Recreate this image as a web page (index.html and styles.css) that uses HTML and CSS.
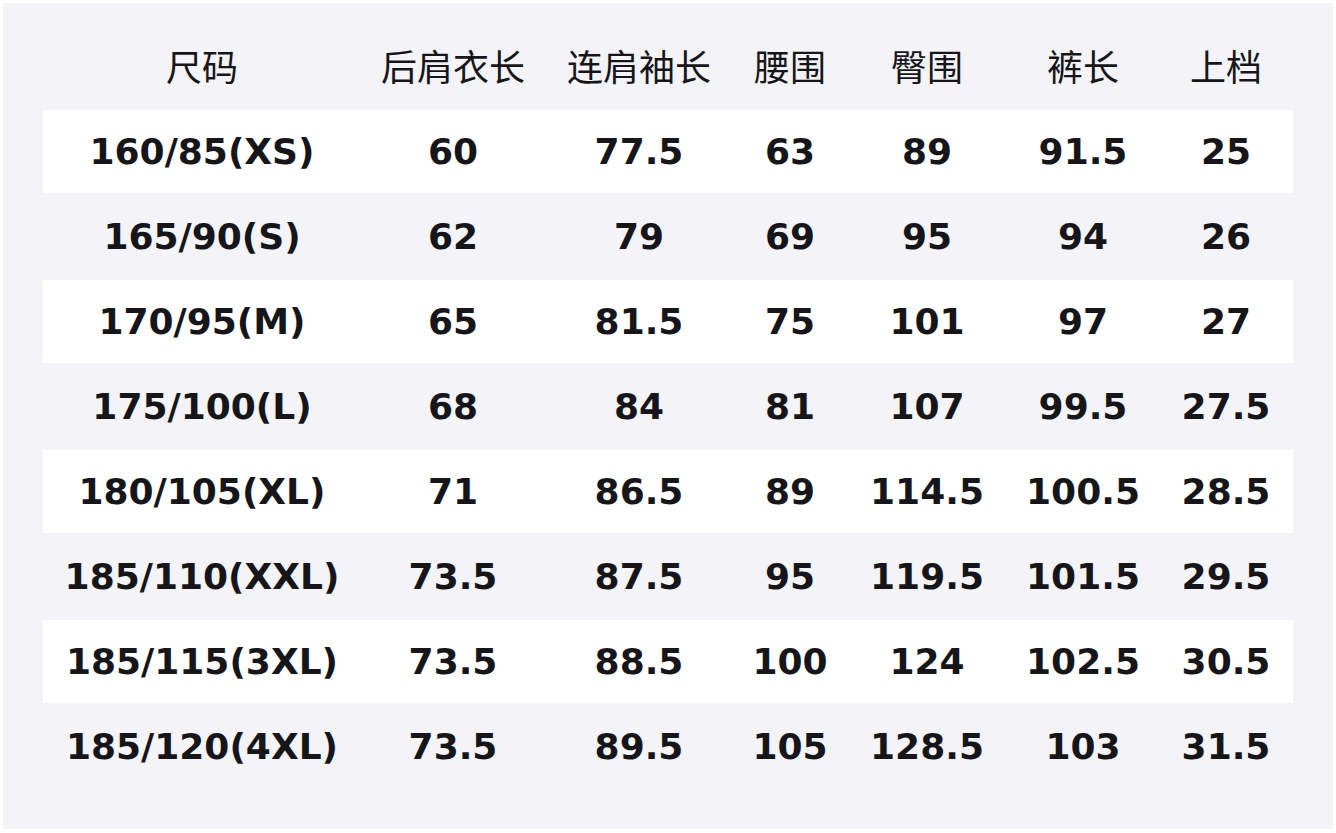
FILE: index.html
```html
<!DOCTYPE html>
<html lang="zh-CN">
<head>
<meta charset="utf-8">
<title>尺码表</title>
<link rel="stylesheet" href="styles.css">
</head>
<body>
<div class="panel">
  <div class="row head">
    <div>尺码</div><div>后肩衣长</div><div>连肩袖长</div><div>腰围</div><div>臀围</div><div>裤长</div><div>上档</div>
  </div>
  <div class="row light">
    <div>160/85(XS)</div><div>60</div><div>77.5</div><div>63</div><div>89</div><div>91.5</div><div>25</div>
  </div>
  <div class="row dark">
    <div>165/90(S)</div><div>62</div><div>79</div><div>69</div><div>95</div><div>94</div><div>26</div>
  </div>
  <div class="row light">
    <div>170/95(M)</div><div>65</div><div>81.5</div><div>75</div><div>101</div><div>97</div><div>27</div>
  </div>
  <div class="row dark">
    <div>175/100(L)</div><div>68</div><div>84</div><div>81</div><div>107</div><div>99.5</div><div>27.5</div>
  </div>
  <div class="row light">
    <div>180/105(XL)</div><div>71</div><div>86.5</div><div>89</div><div>114.5</div><div>100.5</div><div>28.5</div>
  </div>
  <div class="row dark">
    <div>185/110(XXL)</div><div>73.5</div><div>87.5</div><div>95</div><div>119.5</div><div>101.5</div><div>29.5</div>
  </div>
  <div class="row light">
    <div>185/115(3XL)</div><div>73.5</div><div>88.5</div><div>100</div><div>124</div><div>102.5</div><div>30.5</div>
  </div>
  <div class="row dark">
    <div>185/120(4XL)</div><div>73.5</div><div>89.5</div><div>105</div><div>128.5</div><div>103</div><div>31.5</div>
  </div>
</div>
</body>
</html>
```

FILE: styles.css
```css
html, body {
  margin: 0;
  padding: 0;
  background: #ffffff;
}

body {
  width: 1336px;
  height: 833px;
  overflow: hidden;
}

.panel {
  margin: 3px 0 0 3px;
  width: 1330px;
  height: 826px;
  box-sizing: border-box;
  padding: 0 40px;
  background: #f3f3f8;
  color: #16161a;
}

.row {
  display: grid;
  grid-template-columns: 318px 184px 188px 114px 160px 152px 134px;
  align-items: center;
  text-align: center;
  white-space: nowrap;
}

.head {
  height: 107px;
  box-sizing: border-box;
  padding-top: 44px;
  align-items: start;
  font-family: "Noto Sans CJK SC", "Noto Sans", sans-serif;
  font-size: 36px;
  font-weight: 400;
  line-height: 36px;
}

.light, .dark {
  font-family: "DejaVu Sans", "Liberation Sans", sans-serif;
  font-weight: bold;
  font-size: 36px;
  line-height: 42px;
}

.light {
  height: 83px;
  background: #ffffff;
}

.dark {
  height: 87px;
}
```
